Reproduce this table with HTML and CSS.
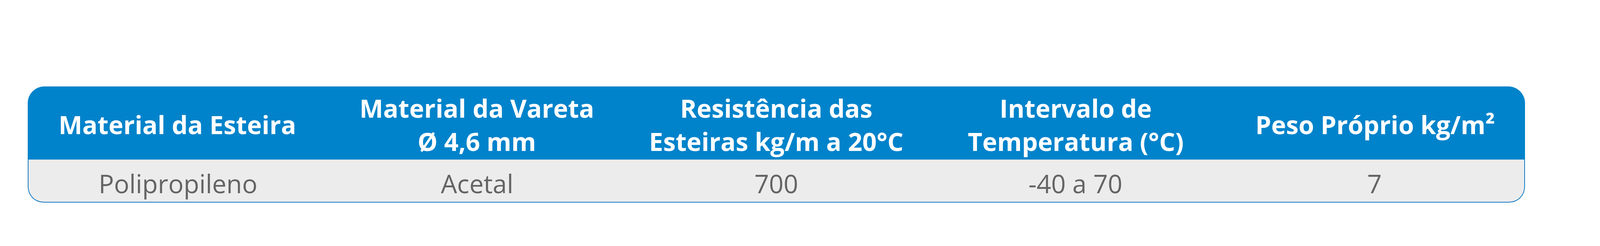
FILE: index.html
```html
<!DOCTYPE html>
<html lang="pt">
<head>
<meta charset="utf-8">
<title>Tabela de especificações</title>
<link rel="stylesheet" href="styles.css">
</head>
<body>
<div class="page">
  <div class="spec-table">
    <div class="spec-head">
      <div class="cell">Material da Esteira</div>
      <div class="cell">Material da Vareta<br>Ø 4,6 mm</div>
      <div class="cell">Resistência das<br>Esteiras kg/m a 20°C</div>
      <div class="cell">Intervalo de<br>Temperatura (°C)</div>
      <div class="cell">Peso Próprio kg/m²</div>
    </div>
    <div class="spec-body">
      <div class="cell">Polipropileno</div>
      <div class="cell">Acetal</div>
      <div class="cell">700</div>
      <div class="cell">-40 a 70</div>
      <div class="cell">7</div>
    </div>
  </div>
</div>
</body>
</html>
```
FILE: styles.css
```css
:root {
  --u: calc(100vw / 4452);
}

html, body {
  margin: 0;
  padding: 0;
  background: #ffffff;
  overflow: hidden;
}

.page {
  padding: calc(var(--u) * 240) 0 0 calc(var(--u) * 77);
}

.spec-table {
  width: calc(var(--u) * 4166);
}

.spec-head,
.spec-body {
  display: grid;
  grid-template-columns: repeat(5, 1fr);
}

.spec-head {
  height: calc(var(--u) * 203);
  box-sizing: border-box;
  padding-top: calc(var(--u) * 11);
  background: #0083cb;
  border-radius: calc(var(--u) * 46) calc(var(--u) * 46) 0 0;
  color: #ffffff;
  font-family: "Open Sans", "Lato", sans-serif;
  font-weight: 700;
  font-size: calc(var(--u) * 70);
  line-height: calc(var(--u) * 93);
}

.spec-body {
  height: calc(var(--u) * 120);
  box-sizing: border-box;
  background: #ececec;
  border: calc(var(--u) * 2.6) solid #137cc2;
  border-top: none;
  border-radius: 0 0 calc(var(--u) * 44) calc(var(--u) * 44);
  color: #646464;
  font-family: "Open Sans", "Lato", sans-serif;
  font-weight: 400;
  font-size: calc(var(--u) * 71);
  line-height: 1;
  padding-top: calc(var(--u) * 15);
}

.cell {
  display: flex;
  align-items: center;
  justify-content: center;
  text-align: center;
  white-space: nowrap;
}
```
